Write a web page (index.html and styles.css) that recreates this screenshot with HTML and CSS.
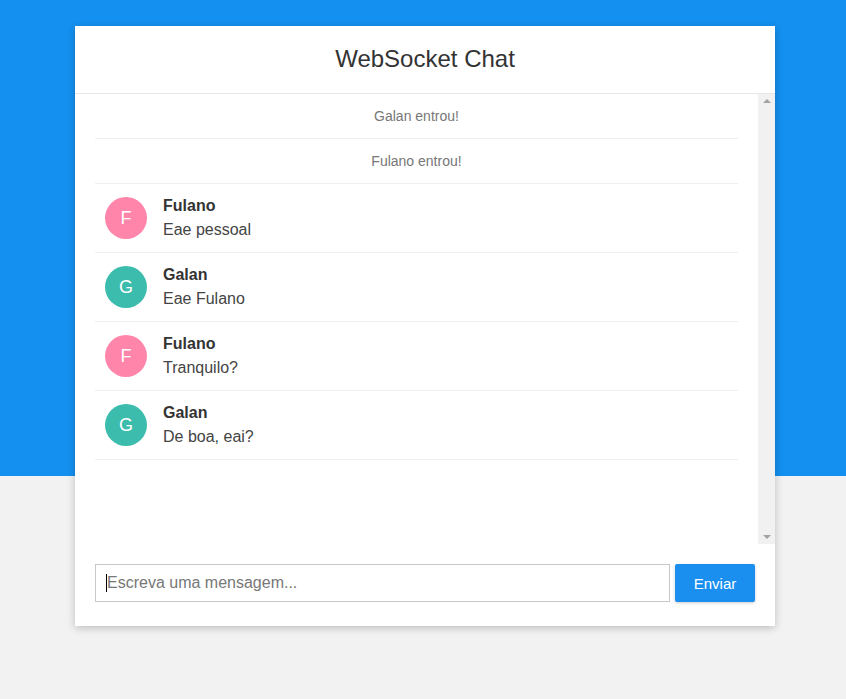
FILE: index.html
```html
<!DOCTYPE html>
<html lang="pt">
<head>
<meta charset="utf-8">
<title>WebSocket Chat</title>
<link rel="stylesheet" href="styles.css">
</head>
<body>
<div class="page">
  <div class="card">
    <header class="card-header">WebSocket Chat</header>
    <div class="messages-wrap">
      <ul class="messages">
        <li class="system">Galan entrou!</li>
        <li class="system">Fulano entrou!</li>
        <li class="msg">
          <div class="avatar pink">F</div>
          <div class="body"><div class="name">Fulano</div><div class="text">Eae pessoal</div></div>
        </li>
        <li class="msg">
          <div class="avatar teal">G</div>
          <div class="body"><div class="name">Galan</div><div class="text">Eae Fulano</div></div>
        </li>
        <li class="msg">
          <div class="avatar pink">F</div>
          <div class="body"><div class="name">Fulano</div><div class="text">Tranquilo?</div></div>
        </li>
        <li class="msg">
          <div class="avatar teal">G</div>
          <div class="body"><div class="name">Galan</div><div class="text">De boa, eai?</div></div>
        </li>
      </ul>
      <div class="scrollbar">
        <span class="arrow up"></span>
        <span class="arrow down"></span>
      </div>
    </div>
    <form class="composer">
      <div class="input"><span class="caret"></span><span class="placeholder">Escreva uma mensagem...</span></div>
      <button type="button" class="send">Enviar</button>
    </form>
  </div>
</div>
</body>
</html>
```
FILE: styles.css
```css
* { box-sizing: border-box; }
html, body {
  margin: 0;
  padding: 0;
}
body {
  font-family: "Liberation Sans", Arial, sans-serif;
  background: linear-gradient(to bottom, #1390f0 0, #1390f0 476px, #f2f2f2 476px, #f2f2f2 100%);
  min-height: 699px;
  color: #333;
}
.page {
  padding: 26px 0 0 4px;
  display: flex;
  justify-content: center;
}
.card {
  width: 700px;
  background: #fff;
  box-shadow: 0 2px 8px rgba(0, 0, 0, 0.22);
}
.card-header {
  height: 68px;
  border-bottom: 1px solid #e6e6e6;
  font-size: 24px;
  color: #333;
  display: flex;
  align-items: center;
  justify-content: center;
  padding-bottom: 1px;
}
.messages-wrap {
  display: flex;
  height: 450px;
}
.messages {
  list-style: none;
  margin: 0;
  padding: 0 20px 0 20px;
  flex: 1;
}
.system {
  height: 45px;
  border-bottom: 1px solid #efefef;
  font-size: 14px;
  color: #777;
  display: flex;
  align-items: center;
  justify-content: center;
}
.msg {
  height: 69px;
  border-bottom: 1px solid #efefef;
  display: flex;
  align-items: center;
  padding-left: 10px;
}
.avatar {
  width: 42px;
  height: 42px;
  border-radius: 50%;
  color: #fff;
  font-size: 18px;
  display: flex;
  align-items: center;
  justify-content: center;
  margin-right: 16px;
  flex: none;
}
.pink { background: #ff85aa; }
.teal { background: #3bbcac; }
.body { line-height: 24px; margin-top: -1px; }
.name {
  font-weight: bold;
  font-size: 16px;
  color: #333;
}
.text {
  font-size: 16px;
  color: #444;
}
.scrollbar {
  width: 17px;
  background: #f1f1f1;
  display: flex;
  flex-direction: column;
  justify-content: space-between;
  align-items: center;
  padding: 5px 0;
}
.arrow {
  width: 0;
  height: 0;
  border-left: 4px solid transparent;
  border-right: 4px solid transparent;
}
.arrow.up { border-bottom: 4px solid #a3a3a3; }
.arrow.down { border-top: 4px solid #a3a3a3; }
.composer {
  display: flex;
  padding: 20px 20px 24px 20px;
  gap: 5px;
  margin: 0;
}
.input {
  flex: 1;
  height: 38px;
  border: 1px solid #c8c8c8;
  display: flex;
  align-items: center;
  padding-left: 10px;
  font-size: 16px;
  color: #777;
}
.caret {
  width: 1px;
  height: 18px;
  background: #000;
}
.send {
  width: 80px;
  height: 38px;
  border: none;
  border-radius: 2px;
  background: #1a8ff0;
  color: #fff;
  font-family: "Liberation Sans", Arial, sans-serif;
  font-size: 15px;
  box-shadow: 0 1px 3px rgba(0, 0, 0, 0.2);
}
```
